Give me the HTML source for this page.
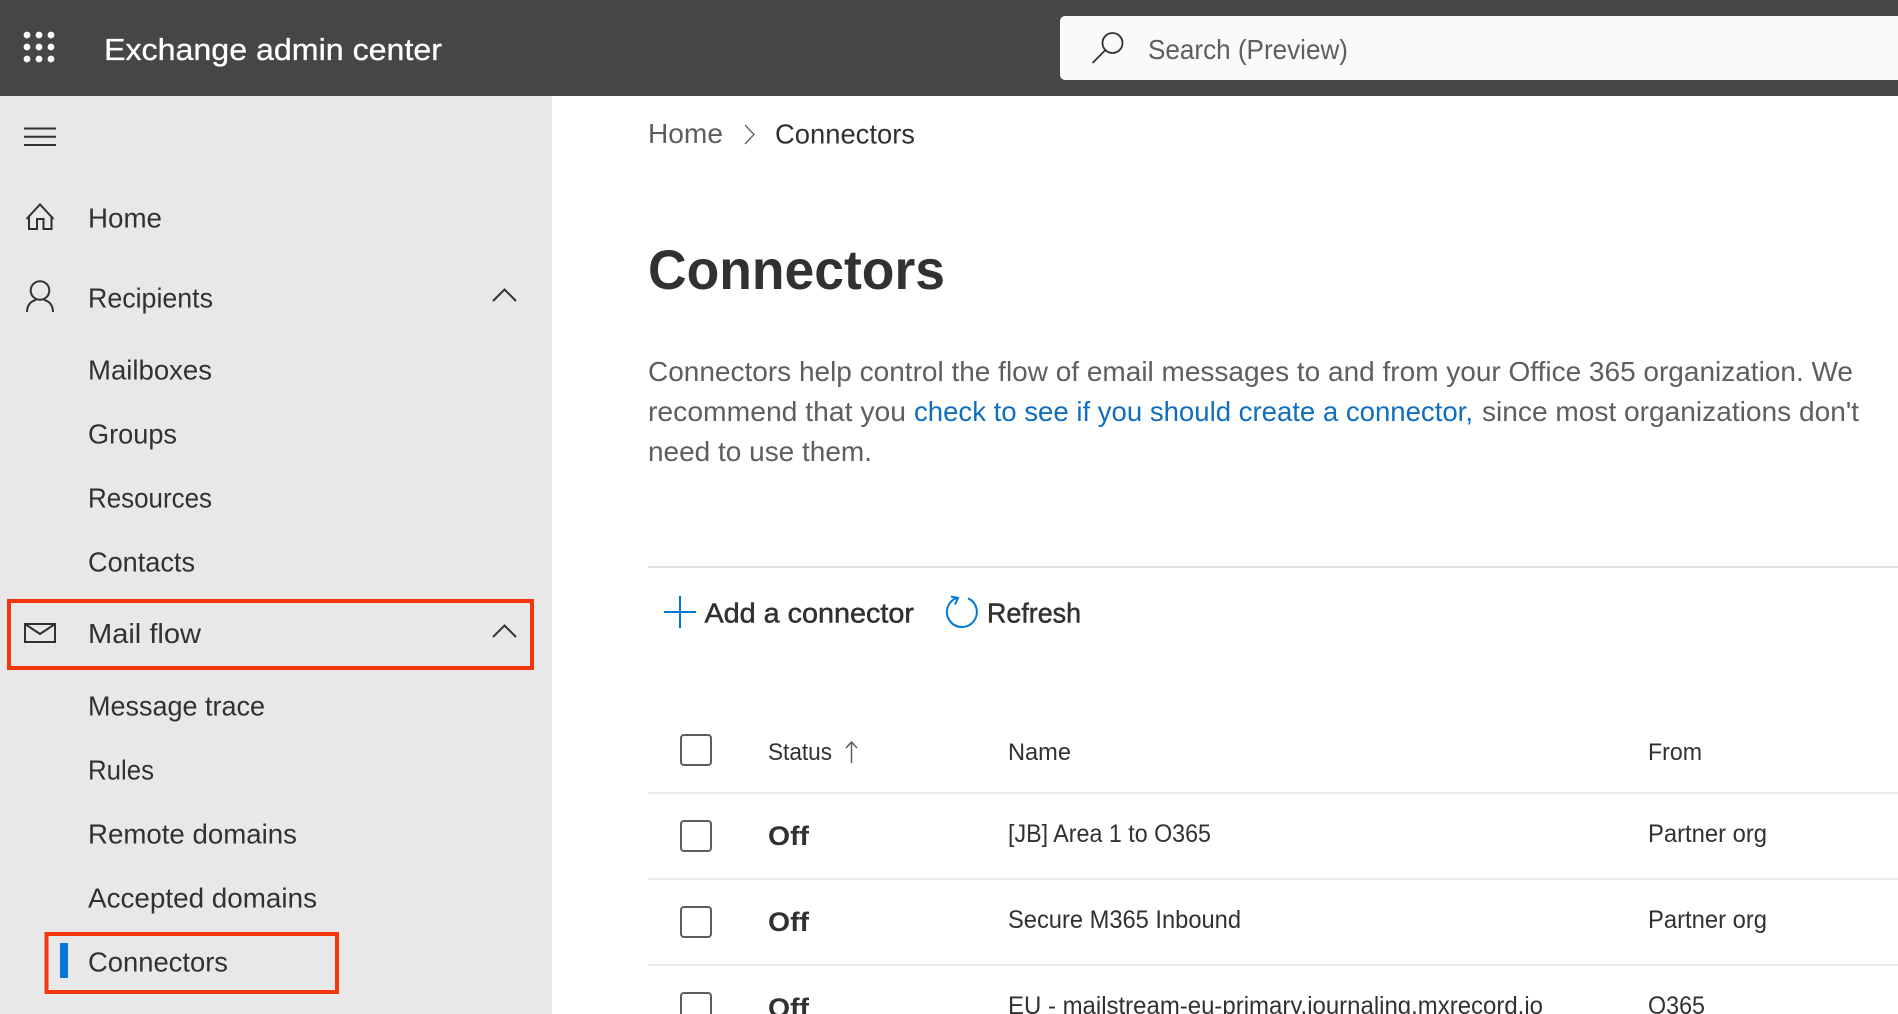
<!DOCTYPE html>
<html lang="en"><head><meta charset="utf-8"><title>Exchange admin center</title>
<style>
html,body{margin:0;padding:0;background:#fff;overflow:hidden;width:1898px;height:1014px}
svg{display:block}
text{font-family:"Liberation Sans",sans-serif;font-size:27px;fill:#323130}
.g{fill:#605e5c}
.s{stroke:#323130;stroke-width:.5px}
.i{fill:none;stroke:#323130;stroke-width:2}
</style></head><body>
<svg width="1898" height="1014" viewBox="0 0 1898 1014" xmlns="http://www.w3.org/2000/svg">
<rect x="0" y="0" width="1898" height="96" fill="#484644"/>
<rect x="0" y="96" width="552" height="918" fill="#e8e8e8"/>
<!-- waffle -->
<g fill="#fff"><circle cx="27" cy="35" r="3.4"/><circle cx="39" cy="35" r="3.4"/><circle cx="51" cy="35" r="3.4"/><circle cx="27" cy="47" r="3.4"/><circle cx="39" cy="47" r="3.4"/><circle cx="51" cy="47" r="3.4"/><circle cx="27" cy="59" r="3.4"/><circle cx="39" cy="59" r="3.4"/><circle cx="51" cy="59" r="3.4"/></g>
<text x="104" y="60" textLength="338" lengthAdjust="spacingAndGlyphs" style="font-size:31px;fill:#fff;stroke:#fff;stroke-width:.3px">Exchange admin center</text>
<!-- search -->
<rect x="1060" y="16" width="860" height="64" rx="5" fill="#fafafa"/>
<circle cx="1112.500" cy="43" r="10" fill="none" stroke="#323130" stroke-width="1.800"/>
<path d="M1105.500 50L1092.500 63" fill="none" stroke="#323130" stroke-width="1.800"/>
<text class="g" x="1148" y="59" textLength="200" lengthAdjust="spacingAndGlyphs" style="font-size:28px">Search (Preview)</text>
<!-- hamburger -->
<path d="M24 128.500H56M24 136.700H56M24 145H56" class="i"/>
<!-- home -->
<path d="M26.500 219L40 204.500L53.500 219M29 216V229H37V219H43.500V229H51.500V216" class="i"/>
<text x="88" y="227.500" textLength="74" lengthAdjust="spacingAndGlyphs" style="font-size:28px">Home</text>
<!-- person -->
<circle cx="40" cy="290.500" r="9.300" class="i"/>
<path d="M27 312C27 305 31 301 36 300M44 300C49 301 53 305 53 312" class="i"/>
<text x="88" y="307.500" textLength="125" lengthAdjust="spacingAndGlyphs" style="font-size:28px">Recipients</text>
<path d="M493 301L504.500 289.500L516 301" class="i"/>
<text x="88" y="379.500" textLength="124" lengthAdjust="spacingAndGlyphs" style="font-size:28px">Mailboxes</text>
<text x="88" y="443.500" textLength="89" lengthAdjust="spacingAndGlyphs" style="font-size:28px">Groups</text>
<text x="88" y="507.500" textLength="124" lengthAdjust="spacingAndGlyphs" style="font-size:28px">Resources</text>
<text x="88" y="571.500" textLength="107" lengthAdjust="spacingAndGlyphs" style="font-size:28px">Contacts</text>
<!-- mail -->
<rect x="25" y="624" width="30" height="18" class="i"/>
<path d="M25 624L40 634L55 624" class="i"/>
<text x="88" y="643" textLength="113" lengthAdjust="spacingAndGlyphs" style="font-size:28px">Mail flow</text>
<path d="M493 637L504.500 625.500L516 637" class="i"/>
<text x="88" y="715.500" textLength="177" lengthAdjust="spacingAndGlyphs" style="font-size:28px">Message trace</text>
<text x="88" y="779.500" textLength="66" lengthAdjust="spacingAndGlyphs" style="font-size:28px">Rules</text>
<text x="88" y="843.500" textLength="209" lengthAdjust="spacingAndGlyphs" style="font-size:28px">Remote domains</text>
<text x="88" y="907.500" textLength="229" lengthAdjust="spacingAndGlyphs" style="font-size:28px">Accepted domains</text>
<rect x="60" y="943" width="8" height="35" fill="#0078d4"/>
<text x="88" y="971.500" textLength="140" lengthAdjust="spacingAndGlyphs" style="font-size:28px">Connectors</text>
<rect x="9" y="601" width="523" height="67" fill="none" stroke="#f4360d" stroke-width="4"/>
<rect x="46.500" y="934" width="290.500" height="58" fill="none" stroke="#f4360d" stroke-width="4"/>
<!-- breadcrumb -->
<text class="g" x="648" y="143" textLength="75" lengthAdjust="spacingAndGlyphs" style="font-size:28px">Home</text>
<path d="M745 125L754 134.500L745 144" fill="none" stroke="#605e5c" stroke-width="1.300"/>
<text x="775" y="143.500" textLength="140" lengthAdjust="spacingAndGlyphs" style="font-size:28px">Connectors</text>
<text x="648" y="289" textLength="297" lengthAdjust="spacingAndGlyphs" style="font-size:56px;font-weight:700">Connectors</text>
<!-- paragraph -->
<text class="g" x="648" y="381" textLength="1205" lengthAdjust="spacingAndGlyphs" style="font-size:28px">Connectors help control the flow of email messages to and from your Office 365 organization. We</text>
<text class="g" x="648" y="421" textLength="258" lengthAdjust="spacingAndGlyphs" style="font-size:28px">recommend that you</text>
<text x="914" y="421" textLength="559" lengthAdjust="spacingAndGlyphs" style="font-size:28px;fill:#106ebe">check to see if you should create a connector,</text>
<text class="g" x="1482" y="421" textLength="377" lengthAdjust="spacingAndGlyphs" style="font-size:28px">since most organizations don't</text>
<text class="g" x="648" y="461" textLength="224" lengthAdjust="spacingAndGlyphs" style="font-size:28px">need to use them.</text>
<rect x="648" y="566" width="1250" height="2" fill="#e1dfdd"/>
<!-- toolbar -->
<path d="M664 612H696M680 596V628" fill="none" stroke="#0078d4" stroke-width="2"/>
<text class="s" x="704.500" y="622.500" textLength="209.500" lengthAdjust="spacingAndGlyphs" style="font-size:28px">Add a connector</text>
<path d="M957 597.800A15 15 0 1 0 968 598.300" fill="none" stroke="#0078d4" stroke-width="2"/>
<path d="M951 596.500L958 598L955 604.500" fill="none" stroke="#0078d4" stroke-width="2"/>
<text class="s" x="987" y="622.500" textLength="94" lengthAdjust="spacingAndGlyphs" style="font-size:28px">Refresh</text>
<!-- table -->
<rect x="681" y="735" width="30" height="30" rx="3" fill="none" stroke="#605e5c" stroke-width="2"/>
<text x="768" y="760" textLength="64" lengthAdjust="spacingAndGlyphs" style="font-size:24px">Status</text>
<path d="M851.500 742V763M846 748L851.500 742L857 748" fill="none" stroke="#605e5c" stroke-width="1.500"/>
<text x="1008" y="760" textLength="63" lengthAdjust="spacingAndGlyphs" style="font-size:24px">Name</text>
<text x="1648" y="760" textLength="54" lengthAdjust="spacingAndGlyphs" style="font-size:24px">From</text>
<rect x="648" y="792" width="1250" height="2" fill="#edebe9"/>
<rect x="681" y="821" width="30" height="30" rx="3" fill="none" stroke="#605e5c" stroke-width="2"/>
<text x="768" y="845" textLength="41" lengthAdjust="spacingAndGlyphs" style="font-weight:700">Off</text>
<text x="1008" y="842" textLength="203" lengthAdjust="spacingAndGlyphs" style="font-size:25px">[JB] Area 1 to O365</text>
<text x="1648" y="842" textLength="119" lengthAdjust="spacingAndGlyphs" style="font-size:25px">Partner org</text>
<rect x="648" y="878" width="1250" height="2" fill="#edebe9"/>
<rect x="681" y="907" width="30" height="30" rx="3" fill="none" stroke="#605e5c" stroke-width="2"/>
<text x="768" y="931" textLength="41" lengthAdjust="spacingAndGlyphs" style="font-weight:700">Off</text>
<text x="1008" y="928" textLength="233" lengthAdjust="spacingAndGlyphs" style="font-size:25px">Secure M365 Inbound</text>
<text x="1648" y="928" textLength="119" lengthAdjust="spacingAndGlyphs" style="font-size:25px">Partner org</text>
<rect x="648" y="964" width="1250" height="2" fill="#edebe9"/>
<rect x="681" y="993" width="30" height="30" rx="3" fill="none" stroke="#605e5c" stroke-width="2"/>
<text x="768" y="1017" textLength="41" lengthAdjust="spacingAndGlyphs" style="font-weight:700">Off</text>
<text x="1008" y="1014" textLength="535" lengthAdjust="spacingAndGlyphs" style="font-size:25px">EU - mailstream-eu-primary.journaling.mxrecord.io</text>
<text x="1648" y="1014" textLength="57" lengthAdjust="spacingAndGlyphs" style="font-size:25px">O365</text>
</svg>
</body></html>
